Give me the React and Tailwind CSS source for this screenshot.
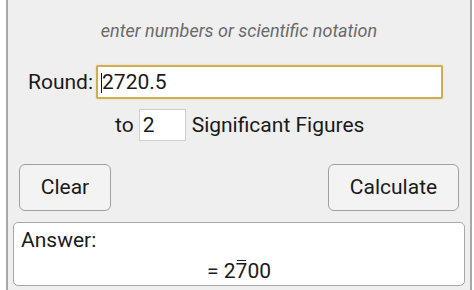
export default function App() {
  return (
    <div className="w-[474px] h-[290px] bg-white overflow-hidden" style={{ fontFamily: 'Roboto, "Liberation Sans", sans-serif' }}>
      <div className="ml-[6px] w-[466px] h-full border-x-2 border-[#a8a8a8] bg-[#efefef] flex flex-col text-[#1a1a1a]">
        <div className="h-[60px] flex items-center justify-center">
          <span className="italic text-[18px] text-[#6a6a6a]">enter numbers or scientific notation</span>
        </div>
        <div className="flex items-center h-[34px] mt-[5px]">
          <span className="ml-[20px] text-[21px] leading-none">Round:</span>
          <div className="ml-[3px] w-[347px] h-[34px] bg-white border-2 border-[#cfae4f] shadow-[0_0_2px_#e6d08a] rounded-[2px] flex items-center relative">
            <span className="absolute left-[3px] top-[6px] w-[1px] h-[20px] bg-[#111]"></span>
            <span className="ml-[4px] text-[21px] leading-none">2720.5</span>
          </div>
        </div>
        <div className="flex items-center h-[32px] mt-[10px]">
          <span className="ml-[107px] text-[21px] leading-none">to</span>
          <div className="ml-[5px] w-[47px] h-[32px] bg-white border border-[#cfcfcf] flex items-center">
            <span className="ml-[3px] text-[21px] leading-none">2</span>
          </div>
          <span className="ml-[6px] text-[21px] leading-none">Significant Figures</span>
        </div>
        <div className="flex justify-between mt-[23px]">
          <div className="ml-[11px] w-[92px] h-[47px] rounded-[6px] border border-[#a0a0a0] bg-[#f3f3f3] flex items-center justify-center text-[21px]">Clear</div>
          <div className="mr-[11px] w-[131px] h-[47px] rounded-[6px] border border-[#a0a0a0] bg-[#f3f3f3] flex items-center justify-center text-[21px]">Calculate</div>
        </div>
        <div className="ml-[5px] mt-[11px] w-[452px] h-[64px] rounded-[5px] border border-[#a8a8a8] bg-white flex flex-col">
          <span className="ml-[7px] mt-[6px] text-[21px] leading-[22px]">Answer:</span>
          <span className="text-center text-[21px] leading-[22px] mt-[9px]">
            = 2<span className="relative inline-block">7<span className="absolute left-[1px] right-[1px] top-[0px] h-[1px] bg-[#1a1a1a]"></span></span>00
          </span>
        </div>
      </div>
    </div>
  );
}
